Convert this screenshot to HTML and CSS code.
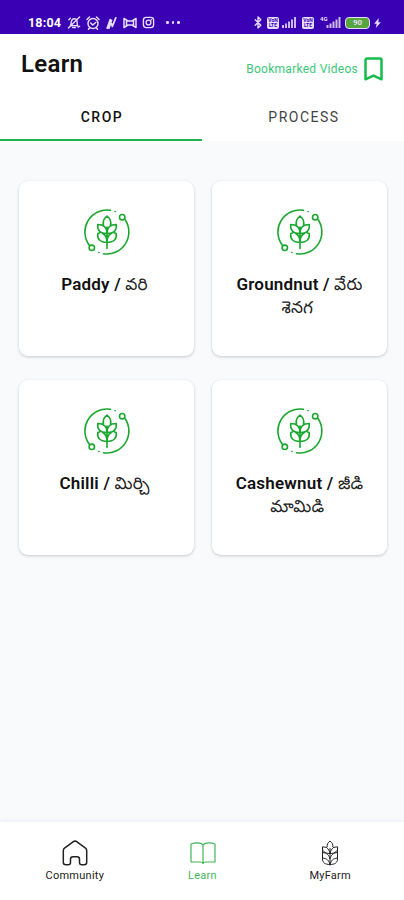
FILE: index.html
```html
<!DOCTYPE html>
<html lang="en">
<head>
<meta charset="utf-8">
<meta name="viewport" content="width=device-width, initial-scale=1">
<title>Learn</title>
<link rel="stylesheet" href="styles.css">
</head>
<body>
<svg class="defs" aria-hidden="true">
  <symbol id="crop" viewBox="0 0 46 46">
    <g fill="none" stroke="currentColor" stroke-width="1.6" stroke-linecap="round" stroke-linejoin="round">
      <path d="M26.500 1.300A22 22 0 0 0 5.300 36.200M41.200 10.800A22 22 0 0 1 19.500 44.700"/>
      <path d="M30.800 2.500l.8.300M14.400 43.300l.8.300" stroke-width="1.200"/>
      <circle cx="38.200" cy="8.200" r="2.700"/><circle cx="7.800" cy="38.800" r="2.700"/>
      <path d="M23 39.500V18M19.500 15.800c-1-3.500.5-6.300 3.500-8.800 3 2.500 4.500 5.300 3.500 8.800M23 24.500C23 19 20 15.500 13.800 15.500c-1 5.500 2.200 9 9.200 9M23 24.500c0-5.500 3-9 9.200-9 1 5.500-2.200 9-9.200 9M15.500 24l-1.700.5c-.8 5.500 2.200 8.800 9.200 8.800 7 0 10-3.300 9.200-8.800l-1.700-.5M23 33c0-4-1.300-6.800-4.300-8.500M23 33c0-4 1.300-6.800 4.300-8.500"/>
    </g>
  </symbol>
  <symbol id="signal" viewBox="0 0 14 11">
    <path fill="currentColor" d="M0 8h2v3H0zM3 6.500h2V11H3zM6 4.500h2V11H6zM9 2.500h2V11H9zM12 0h2v11h-2z"/>
  </symbol>
</svg>
<div class="status">
  <span class="time">18:04</span>
  <svg class="s-mute" viewBox="0 0 14 14"><path d="M3 10.500c1-1.500.7-5 2-6.500s4-1.500 5 .3c.8 1.700-.2 4.200 1 6.200zM5.500 12.500h3M1 13L13 1M1.500 4L3 2.500M11.500 12l1.500-1"/></svg>
  <svg class="s-alarm" viewBox="0 0 14 14"><circle cx="7" cy="7.500" r="5"/><path d="M1 3.500L3.500 1M13 3.500L10.500 1M4.700 7l2 2 3-2.500M3.500 12l-1 1.300M10.500 12l1 1.300"/></svg>
  <svg class="s-bolt" viewBox="0 0 12 14"><path d="M1 13L4.500 3l2.500 8L11 1M3 13l3-9"/></svg>
  <svg class="s-bow" viewBox="0 0 14 12"><path d="M1 1.500l4 2.500h4l4-2.500v9L9 8H5l-4 2.500zM3.500 3.500v5M10.500 3.500v5"/></svg>
  <svg class="s-insta" viewBox="0 0 14 14"><rect x="1.500" y="1.500" width="11" height="11" rx="3"/><circle cx="7" cy="7" r="2.600"/><path d="M10 4h.2"/></svg>
  <span class="dots"><i></i><i></i><i></i></span>
  <span class="spacer"></span>
  <svg class="s-bt" viewBox="0 0 8 14"><path d="M1 4l6 6-3 3V1l3 3-6 6"/></svg>
  <span class="volte"><b>VoN</b><b>LTE</b></span>
  <svg class="s-signal"><use href="#signal"/></svg>
  <span class="volte second"><b>VoN</b><b>LTE</b></span>
  <span class="net">4G</span>
  <svg class="s-signal last"><use href="#signal"/></svg>
  <span class="battery">90</span>
  <svg class="s-charge" viewBox="0 0 8 12"><path d="M5.500 0L0 7h3L2 12l6-7H5z"/></svg>
</div>
<header class="top">
  <h1>Learn</h1>
  <a class="saved">Bookmarked Videos
    <svg viewBox="0 0 19 24"><path d="M3 1.500h13a1.500 1.500 0 0 1 1.500 1.500v19.300l-8-3.600-8 3.600V3A1.500 1.500 0 0 1 3 1.500z"/></svg>
  </a>
</header>
<nav class="tabs">
  <a class="tab active">CROP</a>
  <a class="tab">PROCESS</a>
</nav>
<main class="grid">
  <article class="card"><svg><use href="#crop"/></svg><h2>Paddy / <span lang="te">వరి</span></h2></article>
  <article class="card"><svg><use href="#crop"/></svg><h2>Groundnut / <span lang="te">వేరు<br>శెనగ&nbsp;</span></h2></article>
  <article class="card"><svg><use href="#crop"/></svg><h2>Chilli / <span lang="te">మిర్చి</span></h2></article>
  <article class="card"><svg><use href="#crop"/></svg><h2>Cashewnut / <span lang="te">జీడి<br>మామిడి&nbsp;</span></h2></article>
</main>
<footer class="bottom">
  <a class="item"><svg viewBox="0 0 26 26"><path d="M13 1l2 .8 8.500 6.400c.9.700 1.200 1.300 1.200 2.500v11.500c0 1.600-.9 2.500-2.500 2.500h-2.400c-1.500 0-2.300-.8-2.300-2.300v-3.200c0-1.500-.9-2.400-2.400-2.400h-4.200c-1.500 0-2.400.9-2.400 2.400v3.200c0 1.500-.8 2.300-2.300 2.300H3.800c-1.600 0-2.500-.9-2.500-2.500V10.700c0-1.200.3-1.800 1.200-2.500L11 1.800z"/></svg>Community</a>
  <a class="item current"><svg viewBox="0 0 26 26"><path d="M13 5c-1.500-2-4-2.200-6-2.200C5 2.800 3.500 3 1 4v18h9.500c1 0 2 .5 2.500 1.500.5-1 1.500-1.500 2.500-1.500H25V4c-2.500-1-4-1.200-6-1.200S14.500 3 13 5zM13 5v18"/></svg>Learn</a>
  <a class="item farm"><svg viewBox="0 0 26 26"><path d="M13 25.500V8M10.300 7C9.700 4.800 10.700 2.700 13 1c2.300 1.700 3.300 3.800 2.700 6M10 7.500L5.500 6.800c-.7 4 2 6.700 7.500 6.700 5.500 0 8.200-2.700 7.500-6.700l-4.500.7M5.500 7v12c0 3.500 2.500 5.500 7.500 5.500s7.500-2 7.500-5.500V7M5.500 12.500c4.500.5 6.500 2.500 7.500 6.500 1-4 3-6 7.500-6.500M5.500 18c4.500.5 6.500 2.500 7.500 6.500 1-4 3-6 7.500-6.500M9.500 7.500c2 1.500 3 3.500 3.500 6 .5-2.500 1.500-4.500 3.500-6"/></svg>MyFarm</a>
</footer>
</body>
</html>
```
FILE: styles.css
```css
* { box-sizing: border-box; }
body {
  margin: 0;
  height: 900px;
  display: flex;
  flex-direction: column;
  overflow: hidden;
  background: #f8fafc;
  color: #111;
  font-family: Roboto, "Noto Sans Telugu", "Noto Sans", sans-serif;
}
.defs { display: none; }

.status {
  height: 34px;
  flex: none;
  padding: 11px 23px 0 28px;
  display: flex;
  align-items: center;
  background: #3a00b3;
  color: #e6dcff;
}
.status svg {
  flex: none;
  fill: none;
  stroke: currentColor;
  stroke-width: 1.5;
  stroke-linecap: round;
  stroke-linejoin: round;
}
.time { width: 39px; font: 700 12.500px/14px Roboto, sans-serif; letter-spacing: .2px; color: #fff; }
.status .s-mute { width: 14px; height: 13px; }
.status .s-alarm { width: 14px; height: 14px; margin-left: 5px; }
.status .s-bolt { width: 11px; height: 12px; margin-left: 6px; stroke-width: 2; }
.status .s-bow { width: 14px; height: 12px; margin-left: 6px; }
.status .s-insta { width: 13px; height: 13px; margin-left: 5px; }
.dots { display: flex; gap: 3px; margin-left: 11px; }
.dots i { width: 2.500px; height: 2.500px; border-radius: 50%; background: currentColor; }
.spacer { flex: 1; }
.status .s-bt { width: 8px; height: 13px; margin-right: 5px; }
.volte {
  flex: none;
  width: 12px;
  height: 12px;
  border-radius: 2px;
  background: currentColor;
  display: flex;
  flex-direction: column;
  align-items: center;
  justify-content: center;
}
.volte b { font: 700 5px/5px Roboto, sans-serif; color: #3a00b3; }
.status .s-signal { width: 14px; height: 11px; margin: 0 6px 0 3px; stroke: none; opacity: .85; }
.net { align-self: flex-start; margin: 4px 0 0 6px; width: 6px; font: 700 6px/7px Roboto, sans-serif; }
.status .s-signal.last { width: 15px; margin: 0 4px 0 0; }
.battery {
  width: 25px;
  height: 12px;
  border: 1.500px solid currentColor;
  border-radius: 4px;
  background: #57a63b;
  color: #e6dcff;
  text-align: center;
  font: 700 8px/9px Roboto, sans-serif;
}
.status .s-charge { width: 7px; height: 10px; margin-left: 4px; fill: currentColor; stroke: none; }

.top {
  height: 59px;
  flex: none;
  padding: 0 21px;
  display: flex;
  justify-content: space-between;
  background: #fff;
}
.top h1 { margin: 16px 0 0; font-size: 24px; line-height: 28px; font-weight: 600; letter-spacing: .3px; }
.saved {
  display: flex;
  gap: 6px;
  height: 24px;
  margin-top: 22px;
  padding-top: 1px;
  align-items: center;
  font-size: 12px;
  letter-spacing: .27px;
  color: #3bc878;
}
.saved svg { width: 19px; height: 24px; fill: none; stroke: #14bd4b; stroke-width: 2.500; stroke-linejoin: round; }

.tabs { height: 48px; flex: none; display: flex; background: #fff; }
.tab {
  flex: 1;
  padding: 2px 0 0 2px;
  border-bottom: 2px solid transparent;
  text-align: center;
  font-size: 14px;
  line-height: 44px;
  letter-spacing: 1.500px;
  color: #444;
}
.tab.active { border-bottom-color: #1fb24a; color: #111; font-weight: 500; }

.grid {
  flex: 1;
  display: grid;
  grid-template-columns: 1fr 1fr;
  grid-auto-rows: 175px;
  gap: 24px 18px;
  padding: 40px 17px 0 19px;
}
.card {
  display: flex;
  flex-direction: column;
  align-items: center;
  padding-top: 28px;
  border-radius: 9px;
  background: #fff;
  box-shadow: 0 1px 3px rgba(40, 50, 60, .24);
}
.card svg { width: 46px; height: 46px; flex: none; color: #19a82f; }
.card h2 {
  margin: 18px 4px 0 0;
  font-size: 17px;
  line-height: 23px;
  font-weight: 600;
  letter-spacing: .2px;
  text-align: center;
  white-space: nowrap;
}
.card h2 span { font-weight: 400; color: #222; }
.card:nth-child(even) h2 { margin-right: 0; }

.bottom {
  height: 78px;
  flex: none;
  padding: 18px 10px 0 11px;
  display: flex;
  background: #fff;
  box-shadow: 0 -1px 5px rgba(40, 50, 60, .06);
}
.item {
  flex: 1;
  display: flex;
  flex-direction: column;
  align-items: center;
  font-size: 11px;
  line-height: 13px;
  letter-spacing: .25px;
  color: #222;
}
.item svg { width: 26px; height: 26px; margin-bottom: 3px; fill: none; stroke: currentColor; stroke-width: 1.500; stroke-linejoin: round; }
.item.current { color: #43b65a; }
.item.current svg { stroke-width: 1.200; }
.item.farm svg { stroke-width: 1; }
```
